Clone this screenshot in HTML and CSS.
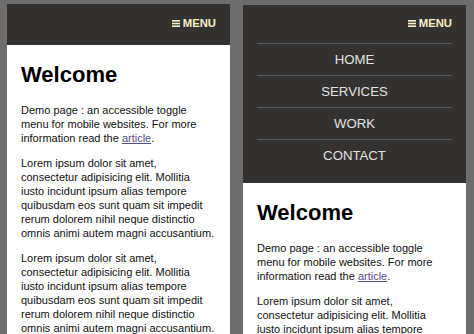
FILE: index.html
```html
<!DOCTYPE html>
<html lang="en">
<head>
<meta charset="utf-8">
<title>Toggle menu demo</title>
<link rel="stylesheet" href="styles.css">
</head>
<body>
<div class="stage">
  <div class="phone">
    <header class="bar bar-closed">
      <div class="toggle-row">
        <a class="toggle" href="#"><svg class="burger" width="8" height="7" viewBox="0 0 8 7"><rect x="0" y="0" width="8" height="1.6"/><rect x="0" y="2.7" width="8" height="1.6"/><rect x="0" y="5.4" width="8" height="1.6"/></svg>MENU</a>
      </div>
    </header>
    <main class="content">
      <h1>Welcome</h1>
      <p>Demo page : an accessible toggle menu for mobile websites. For more information read the <a href="#">article</a>.</p>
      <p>Lorem ipsum dolor sit amet, consectetur adipisicing elit. Mollitia iusto incidunt ipsum alias tempore quibusdam eos sunt quam sit impedit rerum dolorem nihil neque distinctio omnis animi autem magni accusantium.</p>
      <p>Lorem ipsum dolor sit amet, consectetur adipisicing elit. Mollitia iusto incidunt ipsum alias tempore quibusdam eos sunt quam sit impedit rerum dolorem nihil neque distinctio omnis animi autem magni accusantium.</p>
    </main>
  </div>
  <div class="phone phone-open">
    <header class="bar bar-open">
      <div class="toggle-row">
        <a class="toggle" href="#"><svg class="burger" width="8" height="7" viewBox="0 0 8 7"><rect x="0" y="0" width="8" height="1.6"/><rect x="0" y="2.7" width="8" height="1.6"/><rect x="0" y="5.4" width="8" height="1.6"/></svg>MENU</a>
      </div>
      <nav class="nav">
        <a href="#">HOME</a>
        <a href="#">SERVICES</a>
        <a href="#">WORK</a>
        <a href="#">CONTACT</a>
      </nav>
    </header>
    <main class="content">
      <h1>Welcome</h1>
      <p>Demo page : an accessible toggle menu for mobile websites. For more information read the <a href="#">article</a>.</p>
      <p>Lorem ipsum dolor sit amet, consectetur adipisicing elit. Mollitia iusto incidunt ipsum alias tempore quibusdam eos sunt quam sit impedit rerum dolorem nihil neque distinctio omnis animi autem magni accusantium.</p>
    </main>
  </div>
</div>
</body>
</html>
```
FILE: styles.css
```css
html, body {
  margin: 0;
  padding: 0;
  height: 334px;
  overflow: hidden;
  background: #6d6d6d;
}
body {
  font-family: "Liberation Sans", Arial, Helvetica, sans-serif;
}
.stage {
  display: flex;
  gap: 13px;
  padding: 4px 0 0 7px;
  align-items: flex-start;
}
.phone {
  flex: none;
  width: 223px;
  height: 340px;
  background: #fff;
  overflow: hidden;
}
.phone-open {
  margin-top: 1px;
}
.bar {
  background: #333231;
  padding: 0 14px;
}
.bar-closed {
  padding-bottom: 2px;
}
.bar-open {
  padding-bottom: 12px;
}
.toggle-row {
  height: 38px;
  display: flex;
  align-items: center;
  justify-content: flex-end;
}
.bar-closed .toggle-row {
  height: 39px;
}
.toggle {
  display: flex;
  align-items: center;
  gap: 3px;
  color: #f4efc8;
  font-weight: bold;
  font-size: 11.3px;
  text-decoration: none;
  line-height: 1;
}
.burger {
  fill: #f4efc8;
  display: block;
}
.nav {
  display: flex;
  flex-direction: column;
}
.nav a {
  display: flex;
  align-items: center;
  justify-content: center;
  height: 31px;
  border-top: 1px solid #5a5a5a;
  color: #e2e2e2;
  font-size: 13.2px;
  text-decoration: none;
}
.content {
  padding: 17px 14px 0;
  color: #111;
}
.content h1 {
  margin: 0 0 15px;
  font-size: 22px;
  line-height: 26px;
  font-weight: bold;
  color: #000;
}
.content p {
  margin: 0 0 11px;
  font-size: 11px;
  line-height: 14px;
}
.content p a {
  color: #5a4d8d;
}
```
